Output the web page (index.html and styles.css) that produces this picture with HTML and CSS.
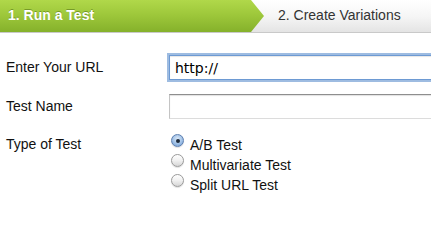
FILE: index.html
```html
<!DOCTYPE html>
<html>
<head>
<meta charset="utf-8">
<link rel="stylesheet" href="styles.css">
</head>
<body>
<div class="steps">
  <div class="step step-active">1. Run a Test</div>
  <div class="step step-next">2. Create Variations</div>
</div>
<form class="form">
  <label class="label" for="url">Enter Your URL</label>
  <input class="input input-focus" id="url" type="text" value="http://">
  <label class="label" for="name">Test Name</label>
  <input class="input" id="name" type="text" value="">
  <div class="label label-top">Type of Test</div>
  <div class="radios">
    <label class="radio-row"><span class="radio radio-on"></span><span class="radio-text">A/B Test</span></label>
    <label class="radio-row"><span class="radio"></span><span class="radio-text">Multivariate Test</span></label>
    <label class="radio-row"><span class="radio"></span><span class="radio-text">Split URL Test</span></label>
  </div>
</form>
</body>
</html>
```
FILE: styles.css
```css
html, body {
  margin: 0;
  padding: 0;
  overflow: hidden;
  background: #fff;
  font-family: "Liberation Sans", Arial, sans-serif;
  color: #111;
}
.steps {
  display: flex;
  height: 32px;
  border-bottom: 1px solid #c9c9c9;
  background: linear-gradient(to bottom, #ffffff 0%, #f6f6f6 50%, #e4e4e4 100%);
}
.step {
  font-size: 14px;
  line-height: 30px;
  height: 32px;
  box-sizing: border-box;
}
.step-active {
  width: 264px;
  flex: none;
  padding-left: 8px;
  font-weight: bold;
  color: #fff;
  text-shadow: 0 -1px 0 rgba(60, 90, 10, 0.45);
  background: linear-gradient(to bottom, #b0d84a 0%, #9ec83b 45%, #85b12b 100%);
  clip-path: polygon(0 0, 251px 0, 264px 16px, 251px 32px, 0 32px);
}
.step-next {
  padding-left: 14px;
  color: #333;
}
.form {
  display: grid;
  grid-template-columns: 163px 1fr;
  padding: 22px 0 0 6px;
  row-gap: 14px;
  align-items: center;
  overflow: hidden;
}
.label {
  font-size: 14px;
  line-height: 16px;
  margin-top: -1px;
}
.label-top {
  align-self: start;
  line-height: 20px;
  margin-top: 1px;
}
.input {
  width: 266px;
  height: 25px;
  box-sizing: border-box;
  margin: 0;
  padding: 0 5px;
  font-family: "DejaVu Sans", sans-serif;
  font-size: 14px;
  color: #000;
  border: 1px solid #c4c4c4;
  border-right: none;
  border-top-color: #8e8e8e;
  border-bottom-color: #dcdcdc;
  box-shadow: inset 0 1px 1px rgba(0, 0, 0, 0.12);
  outline: none;
}
.input-focus {
  border: 1px solid #6d9ad3;
  border-right: none;
  box-shadow: 0 0 0 2px rgba(125, 165, 215, 0.75), inset 0 1px 1px rgba(0, 0, 0, 0.1);
}
.radios {
  display: flex;
  flex-direction: column;
  margin-top: 2px;
  padding-left: 2px;
}
.radio-row {
  display: flex;
  align-items: flex-start;
  height: 20px;
}
.radio {
  width: 13px;
  height: 13px;
  margin-top: -1px;
  margin-right: 6px;
  box-sizing: border-box;
  border-radius: 50%;
  border: 1px solid #9a9a9a;
  background: linear-gradient(to bottom, #ffffff 0%, #f0f0f0 50%, #d6d6d6 100%);
  box-shadow: 0 1px 1px rgba(0, 0, 0, 0.12);
  display: flex;
  align-items: center;
  justify-content: center;
}
.radio-on {
  border-color: #5d7fb0;
  background: radial-gradient(circle at 50% 35%, #dbe9f8 0%, #9fc0e6 55%, #6f9bd1 100%);
}
.radio-on::after {
  content: "";
  width: 4px;
  height: 4px;
  border-radius: 50%;
  background: #1d2a3a;
}
.radio-text {
  font-size: 14px;
  line-height: 20px;
}
```
